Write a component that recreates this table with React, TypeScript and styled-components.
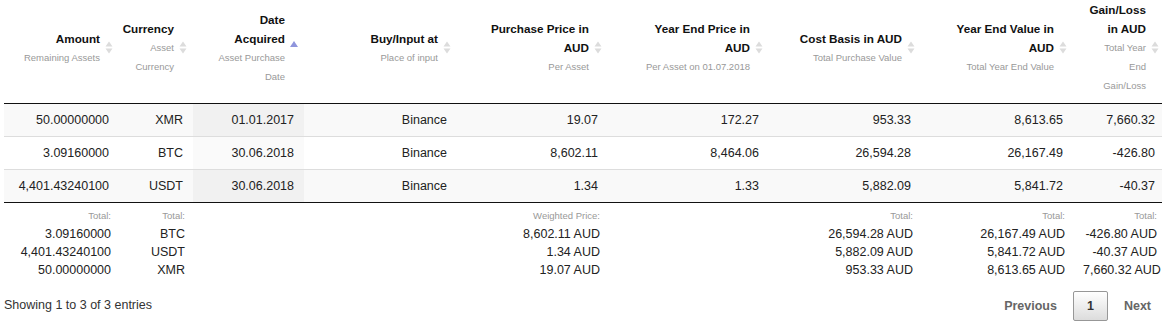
import React, { FC } from "react";
import styled, { createGlobalStyle, css } from "styled-components";

interface IColumn {
  title: string[];
  sub: string[];
  width: number;
  sort?: "asc";
}

interface IRow {
  amount: string;
  currency: string;
  date: string;
  place: string;
  purchase: string;
  yearEndPrice: string;
  cost: string;
  yearEndValue: string;
  gain: string;
}

interface IFooterCell {
  label?: string;
  values?: string[];
}

const columns: IColumn[] = [
  { title: ["Amount"], sub: ["Remaining Assets"], width: 115 },
  { title: ["Currency"], sub: ["Asset", "Currency"], width: 74 },
  { title: ["Date", "Acquired"], sub: ["Asset Purchase", "Date"], width: 111, sort: "asc" },
  { title: ["Buy/Input at"], sub: ["Place of input"], width: 153 },
  { title: ["Purchase Price in", "AUD"], sub: ["Per Asset"], width: 151 },
  { title: ["Year End Price in", "AUD"], sub: ["Per Asset on 01.07.2018"], width: 161 },
  { title: ["Cost Basis in AUD"], sub: ["Total Purchase Value"], width: 152 },
  { title: ["Year End Value in", "AUD"], sub: ["Total Year End Value"], width: 152 },
  { title: ["Gain/Loss", "in AUD"], sub: ["Total Year", "End", "Gain/Loss"], width: 92 },
];

const rows: IRow[] = [
  {
    amount: "50.00000000",
    currency: "XMR",
    date: "01.01.2017",
    place: "Binance",
    purchase: "19.07",
    yearEndPrice: "172.27",
    cost: "953.33",
    yearEndValue: "8,613.65",
    gain: "7,660.32",
  },
  {
    amount: "3.09160000",
    currency: "BTC",
    date: "30.06.2018",
    place: "Binance",
    purchase: "8,602.11",
    yearEndPrice: "8,464.06",
    cost: "26,594.28",
    yearEndValue: "26,167.49",
    gain: "-426.80",
  },
  {
    amount: "4,401.43240100",
    currency: "USDT",
    date: "30.06.2018",
    place: "Binance",
    purchase: "1.34",
    yearEndPrice: "1.33",
    cost: "5,882.09",
    yearEndValue: "5,841.72",
    gain: "-40.37",
  },
];

const footer: IFooterCell[] = [
  { label: "Total:", values: ["3.09160000", "4,401.43240100", "50.00000000"] },
  { label: "Total:", values: ["BTC", "USDT", "XMR"] },
  {},
  {},
  { label: "Weighted Price:", values: ["8,602.11 AUD", "1.34 AUD", "19.07 AUD"] },
  {},
  { label: "Total:", values: ["26,594.28 AUD", "5,882.09 AUD", "953.33 AUD"] },
  { label: "Total:", values: ["26,167.49 AUD", "5,841.72 AUD", "8,613.65 AUD"] },
  { label: "Total:", values: ["-426.80 AUD", "-40.37 AUD", "7,660.32 AUD"] },
];

const GlobalStyle = createGlobalStyle`
  body {
    margin: 0;
    overflow: hidden;
    background: #fff;
    font-family: "Liberation Sans", Arial, Helvetica, sans-serif;
    color: #222;
  }
`;

const Wrapper = styled.div`
  width: 1161px;
  margin-left: 4px;
`;

const Table = styled.table`
  width: 1161px;
  table-layout: fixed;
  border-collapse: separate;
  border-spacing: 0;
`;

const HeadCell = styled.th`
  padding: 0 6px 8px 4px;
  border-bottom: 1px solid #111;
  vertical-align: middle;
  font-weight: normal;
  line-height: 19px;
`;

const HeadInner = styled.div`
  display: flex;
  justify-content: flex-end;
  align-items: center;
`;

const HeadText = styled.div`
  text-align: right;
  white-space: nowrap;
`;

const Title = styled.div`
  font-size: 11.7px;
  font-weight: bold;
  color: #111;
`;

const Subtitle = styled.div`
  font-size: 9.5px;
  color: #999;
`;

const SortIcon = styled.svg`
  flex: none;
  margin-left: 5px;
`;

const Row = styled.tr<{ $odd: boolean }>`
  background: ${props => (props.$odd ? "#f9f9f9" : "#fff")};
`;

const Cell = styled.td<{ $sorted?: boolean; $odd?: boolean; $first?: boolean }>`
  padding: 8px 10px;
  line-height: 16px;
  font-size: 12.5px;
  text-align: right;
  white-space: nowrap;
  color: #222;
  border-top: ${props => (props.$first ? "none" : "1px solid #ddd")};
  ${props =>
    props.$sorted &&
    css`
      background: ${props.$odd ? "#f1f1f1" : "#fafafa"};
    `}
`;

const FootCell = styled.td`
  padding: 3px 8px 4px 10px;
  border-top: 1px solid #111;
  vertical-align: top;
  text-align: right;
  line-height: 18px;
  white-space: nowrap;
`;

const FootLabel = styled.div`
  font-size: 9.5px;
  line-height: 19px;
  color: #999;
`;

const FootValue = styled.div`
  font-size: 12.5px;
  color: #222;
`;

const BottomBar = styled.div`
  display: flex;
  justify-content: space-between;
  align-items: flex-start;
  margin-top: 8px;
`;

const Info = styled.div`
  padding-top: 6px;
  font-size: 12.5px;
  line-height: 16px;
  color: #333;
`;

const Pagination = styled.div`
  display: flex;
`;

const PageButton = styled.span<{ $current?: boolean }>`
  margin-left: 2px;
  padding: 0 13px;
  height: 28px;
  line-height: 28px;
  font-size: 12.5px;
  font-weight: bold;
  border: 1px solid transparent;
  border-radius: 2px;
  color: #666;
  ${props =>
    props.$current &&
    css`
      color: #333;
      border-color: #979797;
      background: linear-gradient(to bottom, #fff 0%, #dcdcdc 100%);
    `}
`;

const SortArrows: FC<{ sort?: "asc" }> = ({ sort }) => {
  if (sort === "asc") {
    return (
      <SortIcon width="8" height="13" viewBox="0 0 8 13">
        <path d="M4 0 L8 6 L0 6 Z" fill="#8f95dc" />
      </SortIcon>
    );
  }
  return (
    <SortIcon width="8" height="13" viewBox="0 0 8 13">
      <path d="M4 0.5 L7.5 5.5 L0.5 5.5 Z" fill="#dcdcdc" />
      <path d="M0.5 7.5 L7.5 7.5 L4 12.5 Z" fill="#dcdcdc" />
    </SortIcon>
  );
};

const App: FC = () => {
  const rowCells = (row: IRow) => [
    row.amount,
    row.currency,
    row.date,
    row.place,
    row.purchase,
    row.yearEndPrice,
    row.cost,
    row.yearEndValue,
    row.gain,
  ];

  return (
    <Wrapper>
      <GlobalStyle />
      <Table>
        <colgroup>
          {columns.map((col, i) => (
            <col key={i} style={{ width: col.width }} />
          ))}
        </colgroup>
        <thead>
          <tr>
            {columns.map((col, i) => (
              <HeadCell key={i}>
                <HeadInner>
                  <HeadText>
                    {col.title.map(line => (
                      <Title key={line}>{line}</Title>
                    ))}
                    {col.sub.map(line => (
                      <Subtitle key={line}>{line}</Subtitle>
                    ))}
                  </HeadText>
                  <SortArrows sort={col.sort} />
                </HeadInner>
              </HeadCell>
            ))}
          </tr>
        </thead>
        <tbody>
          {rows.map((row, r) => (
            <Row key={r} $odd={r % 2 === 0}>
              {rowCells(row).map((value, i) => (
                <Cell key={i} $sorted={i === 2} $odd={r % 2 === 0} $first={r === 0}>
                  {value}
                </Cell>
              ))}
            </Row>
          ))}
        </tbody>
        <tfoot>
          <tr>
            {footer.map((cell, i) => (
              <FootCell key={i}>
                {cell.label && <FootLabel>{cell.label}</FootLabel>}
                {cell.values?.map(v => (
                  <FootValue key={v}>{v}</FootValue>
                ))}
              </FootCell>
            ))}
          </tr>
        </tfoot>
      </Table>

      <BottomBar>
        <Info>Showing 1 to 3 of 3 entries</Info>
        <Pagination>
          <PageButton>Previous</PageButton>
          <PageButton $current>1</PageButton>
          <PageButton>Next</PageButton>
        </Pagination>
      </BottomBar>
    </Wrapper>
  );
};

export default App;
